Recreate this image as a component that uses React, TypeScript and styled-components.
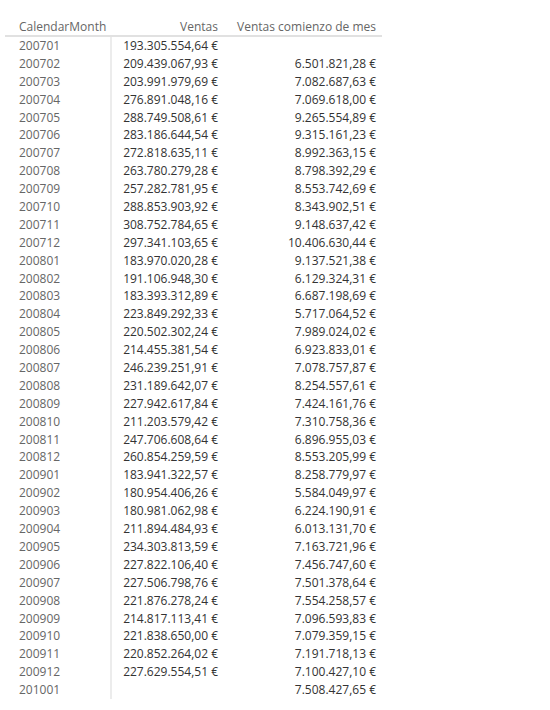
import React from 'react';
import styled, { createGlobalStyle } from 'styled-components';

interface SalesRow {
	month: string;
	sales: string;
	startOfMonth: string;
}

const rows: SalesRow[] = [
	{ month: '200701', sales: '193.305.554,64 €', startOfMonth: '' },
	{ month: '200702', sales: '209.439.067,93 €', startOfMonth: '6.501.821,28 €' },
	{ month: '200703', sales: '203.991.979,69 €', startOfMonth: '7.082.687,63 €' },
	{ month: '200704', sales: '276.891.048,16 €', startOfMonth: '7.069.618,00 €' },
	{ month: '200705', sales: '288.749.508,61 €', startOfMonth: '9.265.554,89 €' },
	{ month: '200706', sales: '283.186.644,54 €', startOfMonth: '9.315.161,23 €' },
	{ month: '200707', sales: '272.818.635,11 €', startOfMonth: '8.992.363,15 €' },
	{ month: '200708', sales: '263.780.279,28 €', startOfMonth: '8.798.392,29 €' },
	{ month: '200709', sales: '257.282.781,95 €', startOfMonth: '8.553.742,69 €' },
	{ month: '200710', sales: '288.853.903,92 €', startOfMonth: '8.343.902,51 €' },
	{ month: '200711', sales: '308.752.784,65 €', startOfMonth: '9.148.637,42 €' },
	{ month: '200712', sales: '297.341.103,65 €', startOfMonth: '10.406.630,44 €' },
	{ month: '200801', sales: '183.970.020,28 €', startOfMonth: '9.137.521,38 €' },
	{ month: '200802', sales: '191.106.948,30 €', startOfMonth: '6.129.324,31 €' },
	{ month: '200803', sales: '183.393.312,89 €', startOfMonth: '6.687.198,69 €' },
	{ month: '200804', sales: '223.849.292,33 €', startOfMonth: '5.717.064,52 €' },
	{ month: '200805', sales: '220.502.302,24 €', startOfMonth: '7.989.024,02 €' },
	{ month: '200806', sales: '214.455.381,54 €', startOfMonth: '6.923.833,01 €' },
	{ month: '200807', sales: '246.239.251,91 €', startOfMonth: '7.078.757,87 €' },
	{ month: '200808', sales: '231.189.642,07 €', startOfMonth: '8.254.557,61 €' },
	{ month: '200809', sales: '227.942.617,84 €', startOfMonth: '7.424.161,76 €' },
	{ month: '200810', sales: '211.203.579,42 €', startOfMonth: '7.310.758,36 €' },
	{ month: '200811', sales: '247.706.608,64 €', startOfMonth: '6.896.955,03 €' },
	{ month: '200812', sales: '260.854.259,59 €', startOfMonth: '8.553.205,99 €' },
	{ month: '200901', sales: '183.941.322,57 €', startOfMonth: '8.258.779,97 €' },
	{ month: '200902', sales: '180.954.406,26 €', startOfMonth: '5.584.049,97 €' },
	{ month: '200903', sales: '180.981.062,98 €', startOfMonth: '6.224.190,91 €' },
	{ month: '200904', sales: '211.894.484,93 €', startOfMonth: '6.013.131,70 €' },
	{ month: '200905', sales: '234.303.813,59 €', startOfMonth: '7.163.721,96 €' },
	{ month: '200906', sales: '227.822.106,40 €', startOfMonth: '7.456.747,60 €' },
	{ month: '200907', sales: '227.506.798,76 €', startOfMonth: '7.501.378,64 €' },
	{ month: '200908', sales: '221.876.278,24 €', startOfMonth: '7.554.258,57 €' },
	{ month: '200909', sales: '214.817.113,41 €', startOfMonth: '7.096.593,83 €' },
	{ month: '200910', sales: '221.838.650,00 €', startOfMonth: '7.079.359,15 €' },
	{ month: '200911', sales: '220.852.264,02 €', startOfMonth: '7.191.718,13 €' },
	{ month: '200912', sales: '227.629.554,51 €', startOfMonth: '7.100.427,10 €' },
	{ month: '201001', sales: '', startOfMonth: '7.508.427,65 €' },
];

export default function App() {
	return (
		<>
			<GlobalStyle />
			<TableWrap>
				<HeaderRow>
					<HeaderCell>CalendarMonth</HeaderCell>
					<HeaderCell align={'right'}>Ventas</HeaderCell>
					<HeaderCell align={'right'}>Ventas comienzo de mes</HeaderCell>
				</HeaderRow>
				{rows.map((row) => (
					<BodyRow key={row.month}>
						<MonthCell>{row.month}</MonthCell>
						<ValueCell>{row.sales}</ValueCell>
						<ValueCell>{row.startOfMonth}</ValueCell>
					</BodyRow>
				))}
			</TableWrap>
		</>
	);
}

const GlobalStyle = createGlobalStyle`
	body {
		margin: 0;
		background: #ffffff;
		font-family: 'Open Sans', 'Noto Sans', sans-serif;
	}
`;

const TableWrap = styled.div`
	width: 377px;
	margin: 18px 0 0 5px;
	font-size: 12px;
`;

const HeaderRow = styled.div`
	display: grid;
	grid-template-columns: 107px 112px 158px;
	height: 17px;
	line-height: 17px;
	border-bottom: 2px solid #e1e1e1;
`;

const HeaderCell = styled.div<{ align?: 'left' | 'right' }>`
	color: #666666;
	white-space: nowrap;
	text-align: ${({ align }) => align || 'left'};
	padding: ${({ align }) => (align === 'right' ? '0 6px 0 0' : '0 0 0 14px')};
`;

const BodyRow = styled.div`
	display: grid;
	grid-template-columns: 107px 112px 158px;
	height: 17.9px;
	line-height: 17.9px;
`;

const MonthCell = styled.div`
	color: #666666;
	padding-left: 14px;
	border-right: 2px solid #ececec;
`;

const ValueCell = styled.div`
	color: #333333;
	text-align: right;
	padding-right: 6px;
	white-space: nowrap;
`;
